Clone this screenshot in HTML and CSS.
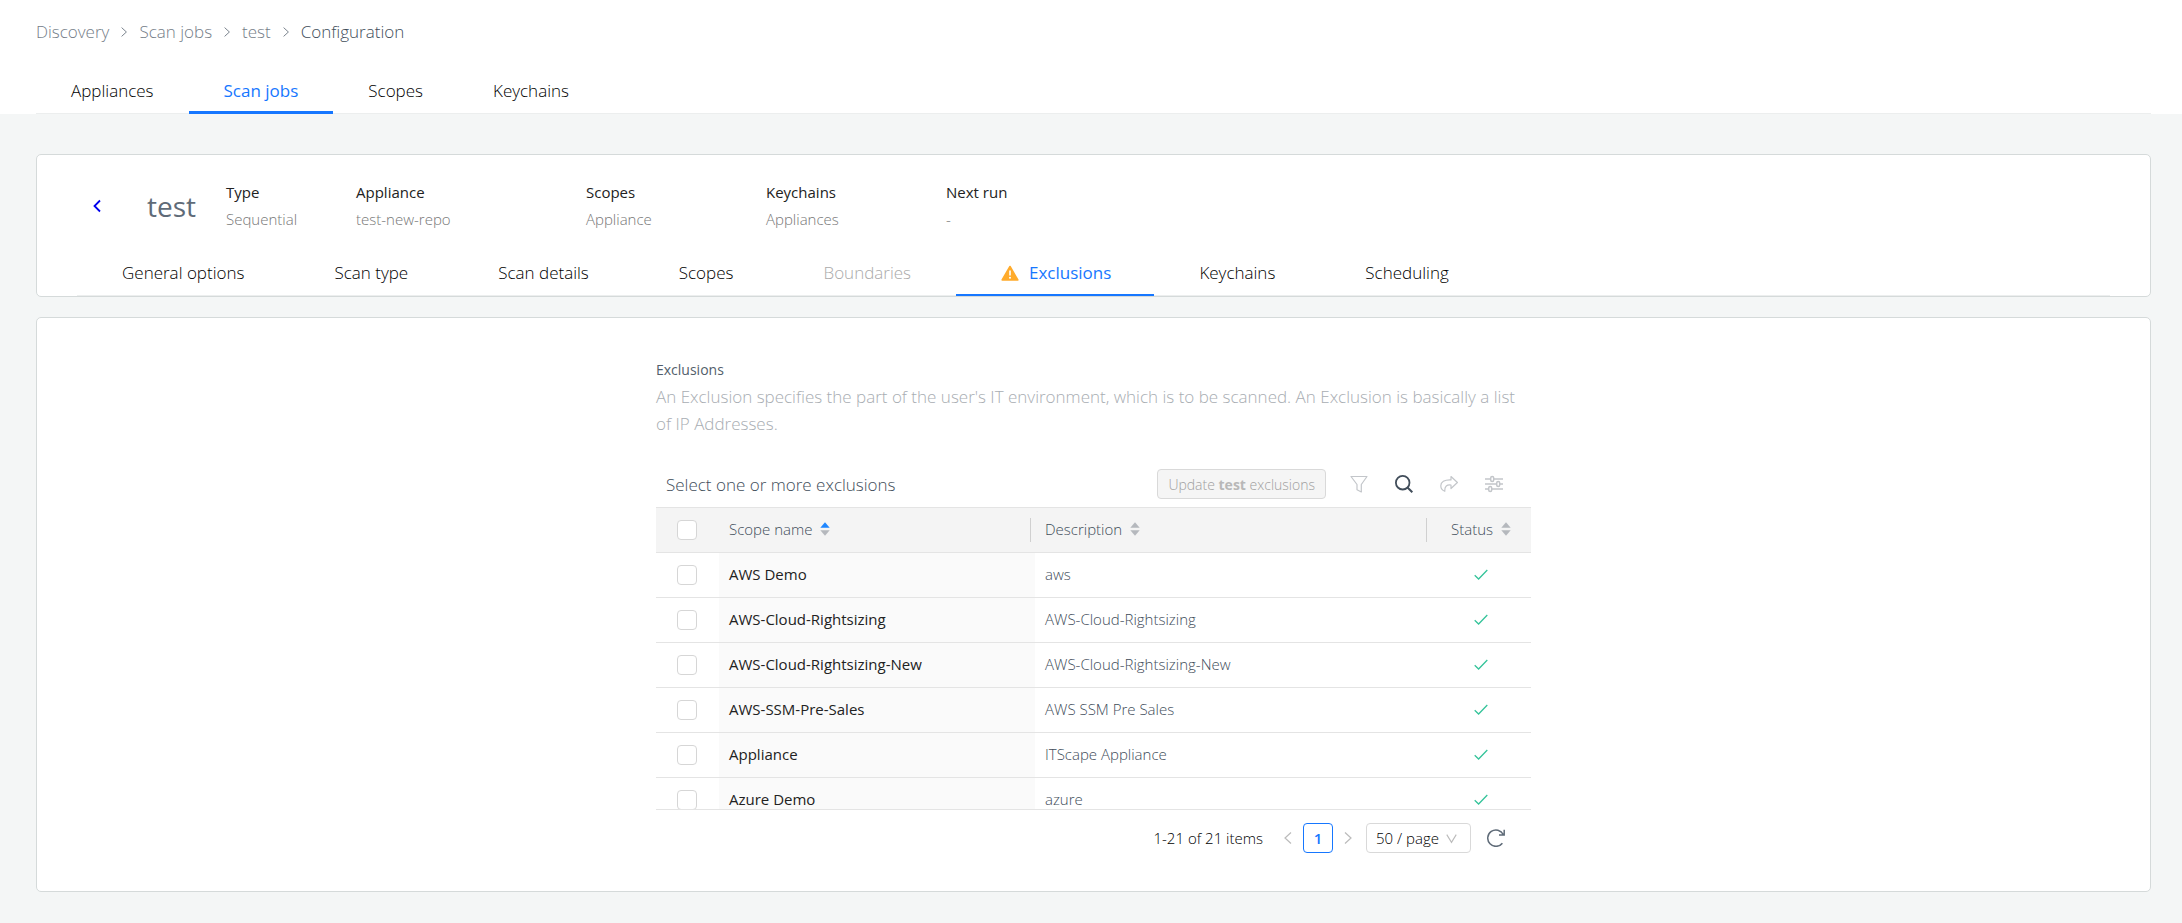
FILE: index.html
```html
<!DOCTYPE html>
<html lang="en">
<head>
<meta charset="utf-8">
<title>Scan job configuration</title>
<link rel="stylesheet" href="styles.css">
</head>
<body>
<svg class="sprite" aria-hidden="true">
  <symbol id="chevron" viewBox="0 0 10 14"><path d="M2 1.500 8 7 2 12.500" fill="none" stroke="currentColor" stroke-width="1.200"/></symbol>
  <symbol id="check" viewBox="0 0 14 12"><path d="M.7 6.300 4.600 10 13.300 1" fill="none" stroke="currentColor" stroke-width="1.300"/></symbol>
  <symbol id="sort" viewBox="0 0 10 14"><path class="up" d="M5 .3 9.700 5.800H.3z"/><path class="down" d="M5 13.700 .3 8.200h9.400z"/></symbol>
</svg>

<header class="header">
  <nav class="breadcrumb" aria-label="Breadcrumb">
    <a href="#">Discovery</a>
    <svg class="crumb-sep"><use href="#chevron"/></svg>
    <a href="#">Scan jobs</a>
    <svg class="crumb-sep"><use href="#chevron"/></svg>
    <a href="#">test</a>
    <svg class="crumb-sep"><use href="#chevron"/></svg>
    <span class="current">Configuration</span>
  </nav>
  <nav class="main-tabs" aria-label="Discovery sections">
    <a href="#">Appliances</a>
    <a href="#" class="active" aria-current="page">Scan jobs</a>
    <a href="#">Scopes</a>
    <a href="#">Keychains</a>
  </nav>
</header>

<main class="content">
  <section class="card job">
    <div class="summary">
      <a class="back" href="#" aria-label="Back"><svg viewBox="0 0 10 14"><path d="M8 1.500 2.500 7 8 12.500" fill="none" stroke="currentColor" stroke-width="1.800"/></svg></a>
      <h1>test</h1>
      <dl class="facts">
        <div><dt>Type</dt><dd>Sequential</dd></div>
        <div><dt>Appliance</dt><dd>test-new-repo</dd></div>
        <div><dt>Scopes</dt><dd>Appliance</dd></div>
        <div><dt>Keychains</dt><dd>Appliances</dd></div>
        <div><dt>Next run</dt><dd>-</dd></div>
      </dl>
    </div>
    <div class="job-tabs" role="tablist">
      <button type="button" role="tab">General options</button>
      <button type="button" role="tab">Scan type</button>
      <button type="button" role="tab">Scan details</button>
      <button type="button" role="tab">Scopes</button>
      <button type="button" role="tab" disabled>Boundaries</button>
      <button type="button" role="tab" class="active" aria-selected="true">
        <svg class="warning" viewBox="0 0 18 16"><path d="M9 1.500 16.800 15H1.200z" fill="#ffab2b" stroke="#ffab2b" stroke-width="1.600" stroke-linejoin="round"/><path d="M9 5.500v5" stroke="#fff" stroke-width="1.600"/><circle cx="9" cy="12.800" r="1" fill="#fff"/></svg>
        Exclusions
      </button>
      <button type="button" role="tab">Keychains</button>
      <button type="button" role="tab">Scheduling</button>
    </div>
  </section>

  <section class="card panel">
    <div class="exclusions">
      <h2>Exclusions</h2>
      <p class="lead">An Exclusion specifies the part of the user's IT environment, which is to be scanned. An Exclusion is basically a list of IP Addresses.</p>

      <div class="toolbar">
        <span class="toolbar-title">Select one or more exclusions</span>
        <button type="button" class="update" disabled>Update <b>test</b> exclusions</button>
        <div class="tools">
          <button type="button" disabled aria-label="Filter"><svg viewBox="0 0 18 18"><path d="M1 1.500h16L11.300 9.500v7.500L7 14.700V9.500z" fill="none" stroke="currentColor" stroke-width="1.200" stroke-linejoin="round"/></svg></button>
          <button type="button" aria-label="Search"><svg viewBox="0 0 18 18"><circle cx="7.700" cy="7.700" r="6.800" fill="none" stroke="currentColor" stroke-width="1.800"/><path d="M12.500 12.500 17.300 17.300" stroke="currentColor" stroke-width="2"/></svg></button>
          <button type="button" disabled aria-label="Share"><svg viewBox="0 0 18 18"><path d="M11 1.500 17.400 7.500 11 13.500V10C7 9.600 4.500 10.800 4.800 16.300 2.500 15.500.8 13.600.8 10.800.8 7 4.300 4.600 11 4.900z" fill="none" stroke="currentColor" stroke-width="1.200" stroke-linejoin="round"/></svg></button>
          <button type="button" disabled aria-label="Settings"><svg viewBox="0 0 18 18" fill="none" stroke="currentColor" stroke-width="1.500"><path d="M0 4h5.500M9 4h9M0 9h11.500M15 9h3M0 14h3.500M7 14h11"/><rect x="5.700" y="1.500" width="3" height="5" rx="1.500"/><rect x="11.700" y="6.500" width="3" height="5" rx="1.500"/><rect x="3.700" y="11.500" width="3" height="5" rx="1.500"/></svg></button>
        </div>
      </div>

      <div class="table-scroll">
        <table>
          <thead>
            <tr>
              <th class="pick"><input type="checkbox" aria-label="Select all"></th>
              <th class="name"><div class="head">Scope name <svg class="sort ascending"><use href="#sort"/></svg></div></th>
              <th class="desc"><div class="head">Description <svg class="sort"><use href="#sort"/></svg></div></th>
              <th class="status"><div class="head">Status <svg class="sort"><use href="#sort"/></svg></div></th>
            </tr>
          </thead>
          <tbody>
            <tr><td class="pick"><input type="checkbox" aria-label="AWS Demo"></td><td class="name">AWS Demo</td><td>aws</td><td class="status"><svg class="ok"><use href="#check"/></svg></td></tr>
            <tr><td class="pick"><input type="checkbox" aria-label="AWS-Cloud-Rightsizing"></td><td class="name">AWS-Cloud-Rightsizing</td><td>AWS-Cloud-Rightsizing</td><td class="status"><svg class="ok"><use href="#check"/></svg></td></tr>
            <tr><td class="pick"><input type="checkbox" aria-label="AWS-Cloud-Rightsizing-New"></td><td class="name">AWS-Cloud-Rightsizing-New</td><td>AWS-Cloud-Rightsizing-New</td><td class="status"><svg class="ok"><use href="#check"/></svg></td></tr>
            <tr><td class="pick"><input type="checkbox" aria-label="AWS-SSM-Pre-Sales"></td><td class="name">AWS-SSM-Pre-Sales</td><td>AWS SSM Pre Sales</td><td class="status"><svg class="ok"><use href="#check"/></svg></td></tr>
            <tr><td class="pick"><input type="checkbox" aria-label="Appliance"></td><td class="name">Appliance</td><td>ITScape Appliance</td><td class="status"><svg class="ok"><use href="#check"/></svg></td></tr>
            <tr><td class="pick"><input type="checkbox" aria-label="Azure Demo"></td><td class="name">Azure Demo</td><td>azure</td><td class="status"><svg class="ok"><use href="#check"/></svg></td></tr>
          </tbody>
        </table>
      </div>

      <div class="pager">
        <span class="total">1-21 of 21 items</span>
        <button type="button" class="step prev" disabled aria-label="Previous page"><svg><use href="#chevron"/></svg></button>
        <button type="button" class="page" aria-current="page">1</button>
        <button type="button" class="step next" disabled aria-label="Next page"><svg><use href="#chevron"/></svg></button>
        <div class="page-size">
          <select aria-label="Items per page"><option>50 / page</option></select>
          <svg viewBox="0 0 10 10"><path d="M.7 1.500 5 8.500 9.300 1.500" fill="none" stroke="currentColor"/></svg>
        </div>
        <button type="button" class="refresh" aria-label="Refresh"><svg viewBox="0 0 18 18"><path d="M16.300 5.500A8.200 8.200 0 1 0 15.400 14.200M17.200.8V6h-5.200" fill="none" stroke="currentColor" stroke-width="1.500"/></svg></button>
      </div>
    </div>
  </section>
</main>
</body>
</html>
```
FILE: styles.css
```css
* {
  box-sizing: border-box;
}

body {
  margin: 0;
  min-height: 100vh;
  background: #f4f6f6;
  color: #414d5a;
  font: 300 15px/21px "Segoe UI", "Open Sans", "Noto Sans", sans-serif;
}

h1, h2, p, dl, dd {
  margin: 0;
}

a {
  color: inherit;
  text-decoration: none;
}

button {
  padding: 0;
  border: 0;
  background: none;
  color: inherit;
  font: inherit;
  cursor: pointer;
}

svg {
  display: block;
  flex: none;
}

.sprite {
  position: absolute;
  width: 0;
  height: 0;
}

/* Page header */
.header {
  padding: 18px 31px 0 36px;
  background: #fff;
  font-size: 17px;
  line-height: 27px;
}

.breadcrumb {
  display: flex;
  align-items: center;
  gap: 11px;
  color: #747d88;
}

.breadcrumb .current {
  color: #414d5a;
}

.crumb-sep {
  width: 8px;
  height: 12px;
}

.main-tabs {
  display: flex;
  margin-top: 23px;
  border-bottom: 1px solid #eceeee;
  color: #000;
}

.main-tabs a {
  margin-bottom: -1px;
  padding: 9px 35px 7px;
  border-bottom: 3px solid transparent;
}

.main-tabs .active {
  border-color: #1677ff;
  color: #1677ff;
}

/* Cards */
.content {
  display: grid;
  gap: 20px;
  padding: 40px 31px 31px 36px;
}

.card {
  border: 1px solid #d5dada;
  border-radius: 5px;
  background: #fff;
}

.summary {
  display: flex;
  align-items: center;
  padding: 24px 0 0 55px;
}

.back {
  color: #00e;
}

.back svg {
  width: 10px;
  height: 14px;
}

h1 {
  width: 79px;
  margin-left: 45px;
  color: #5f6b78;
  font-size: 28px;
  font-weight: 400;
  line-height: 34px;
}

.facts {
  display: grid;
  grid-template-columns: 130px 230px 180px 180px 180px;
  line-height: 27px;
}

.facts dt {
  color: #222;
  font-weight: 400;
}

.facts dd {
  color: #777;
}

.job-tabs {
  display: flex;
  margin: 24px 40px 0;
  border-bottom: 1px solid #eceeee;
  color: #000;
  font-size: 17px;
  line-height: 27px;
}

.job-tabs button {
  display: flex;
  align-items: center;
  gap: 10px;
  margin-bottom: -1px;
  padding: 2px 45px 8px;
  border-bottom: 2px solid transparent;
}

.job-tabs .active {
  padding: 2px 43px 8px 45px;
  border-color: #1677ff;
  color: #1677ff;
}

.main-tabs .active,
.job-tabs .active {
  font-weight: 400;
}

.job-tabs button:disabled {
  color: #aaa;
}

.warning {
  width: 18px;
  height: 16px;
}

/* Exclusions panel */
.panel {
  padding: 38px 20px;
}

.exclusions {
  max-width: 875px;
  margin: 0 auto;
}

h2 {
  color: #525e6b;
  font-size: 14px;
  font-weight: 400;
  line-height: 27px;
}

.lead {
  color: #a8adb2;
  font-size: 17px;
  line-height: 27px;
}

.toolbar {
  display: flex;
  align-items: center;
  margin-top: 32px;
  padding: 0 28px 8px 10px;
}

.toolbar-title {
  margin-right: auto;
  font-size: 17px;
}

.update {
  height: 30px;
  padding: 0 10px;
  border: 1px solid #d9d9d9;
  border-radius: 4px;
  background: #f5f5f5;
  color: #a0a0a0;
  font-size: 14px;
}

.update b {
  color: #b8b8b8;
  font-weight: 700;
}

.tools {
  display: flex;
  gap: 27px;
  margin-left: 24px;
}

.tools svg,
.refresh svg {
  width: 18px;
  height: 18px;
}

.tools button:disabled {
  color: #c3c6ca;
}

.table-scroll {
  max-height: 303px;
  border-bottom: 1px solid #e4e4e4;
  overflow-y: auto;
  scrollbar-width: none;
}

table {
  width: 100%;
  border-collapse: separate;
  border-spacing: 0;
  table-layout: fixed;
}

th, td {
  height: 45px;
  padding: 0 10px;
  border-bottom: 1px solid #e4e4e4;
  text-align: left;
  font-weight: 300;
}

td {
  padding-bottom: 2px;
}

th {
  position: sticky;
  top: 0;
  height: 46px;
  border-top: 1px solid #e4e4e4;
  background: #f4f4f4;
}

.head {
  display: flex;
  align-items: center;
  gap: 8px;
  height: 24px;
  padding-bottom: 2px;
}

.name .head,
.desc .head {
  margin-right: -6px;
  border-right: 1px solid #d0d0d0;
}

th.status {
  padding: 0 20px;
}

.sort {
  width: 10px;
  height: 14px;
  fill: #b5b8bd;
}

.ascending {
  --sort-up: #1e86ff;
}

.up {
  fill: var(--sort-up, #b5b8bd);
}

.pick {
  width: 63px;
  padding: 0 22px 0 21px;
}

.name {
  width: 316px;
}

td.name {
  background: #fafafa;
  color: #222;
  font-weight: 400;
}

.status {
  width: 100px;
  padding-bottom: 0;
}

input[type="checkbox"] {
  display: block;
  width: 20px;
  height: 20px;
  margin: 0;
  border: 1px solid #d6d6d6;
  border-radius: 4px;
  background: #fff;
  appearance: none;
}

input[type="checkbox"]:checked {
  border-color: #1677ff;
  background: #1677ff;
}

.ok {
  width: 14px;
  height: 12px;
  margin: 0 auto;
  color: #35c49a;
}

/* Pager */
.pager {
  display: flex;
  align-items: center;
  justify-content: flex-end;
  margin-top: 13px;
  padding-right: 26px;
  color: #000;
}

.total {
  margin-right: 20px;
}

.step {
  color: #bbb;
}

.step svg {
  width: 10px;
  height: 14px;
}

.prev svg {
  transform: scaleX(-1);
}

.page {
  width: 30px;
  height: 30px;
  margin: 0 10px;
  border: 1px solid #1677ff;
  border-radius: 4px;
  color: #1677ff;
  font-weight: 600;
}

.page-size {
  position: relative;
  margin: 0 16px 0 13px;
}

.page-size select {
  width: 105px;
  height: 30px;
  padding: 0 9px;
  border: 1px solid #d9d9d9;
  border-radius: 4px;
  background: #fff;
  color: inherit;
  font: inherit;
  appearance: none;
}

.page-size svg {
  position: absolute;
  top: 10px;
  right: 14px;
  width: 11px;
  height: 11px;
  color: #bbb;
  pointer-events: none;
}

.refresh {
  color: #5f6b78;
}
```
